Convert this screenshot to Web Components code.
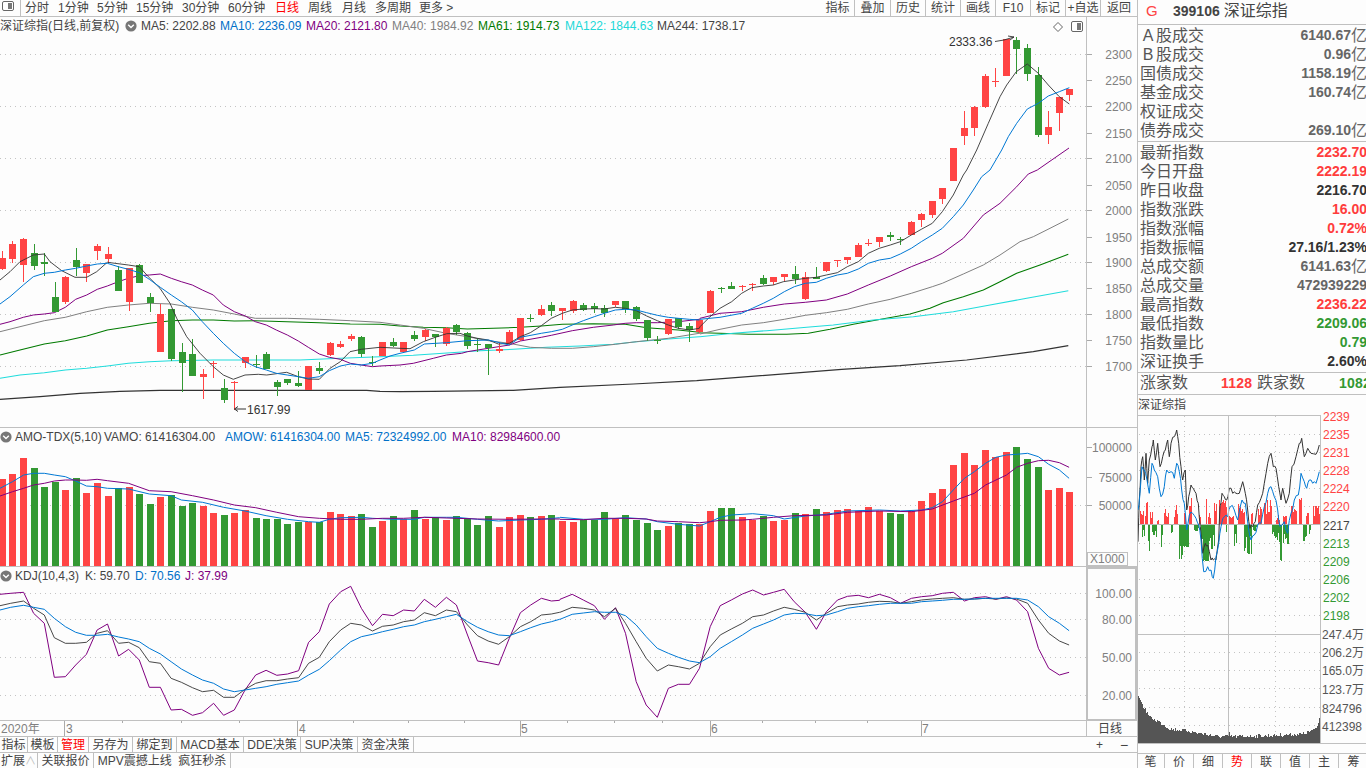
<!DOCTYPE html>
<html lang="zh-CN"><head><meta charset="utf-8"><title>深证综指</title>
<style>
html,body{margin:0;height:768px;overflow:hidden;background:#fdfdfd}
body{font:12px/16px "Liberation Sans","Noto Sans CJK SC",sans-serif;color:#444}
</style></head><body>
<tdx-app>
  <div slot="left">
    <tdx-bar h="17">
      <tdx-win-icon></tdx-win-icon>
      <tdx-item plain w="33" style="margin-left:4px">分时</tdx-item>
      <tdx-item plain w="39">1分钟</tdx-item><tdx-item plain w="39">5分钟</tdx-item>
      <tdx-item plain w="46">15分钟</tdx-item><tdx-item plain w="46">30分钟</tdx-item>
      <tdx-item plain w="47">60分钟</tdx-item><tdx-item plain on w="33">日线</tdx-item>
      <tdx-item plain w="34">周线</tdx-item><tdx-item plain w="33">月线</tdx-item>
      <tdx-item plain w="44">多周期</tdx-item><tdx-item plain w="40">更多 &gt;</tdx-item>
      <span style="flex:1"></span>
      <tdx-item w="34" first>指标</tdx-item><tdx-item w="36">叠加</tdx-item><tdx-item w="35">历史</tdx-item>
      <tdx-item w="35">统计</tdx-item><tdx-item w="35">画线</tdx-item><tdx-item w="35">F10</tdx-item>
      <tdx-item w="35">标记</tdx-item><tdx-item w="35">+自选</tdx-item><tdx-item w="36" last>返回</tdx-item>
    </tdx-bar>
    <tdx-pane kind="price" top="17" h="411">
      <span style="width:119px;flex:none">深证综指(日线,前复权)</span><tdx-drop style="margin:0 4px 0 6px"></tdx-drop>
      <span style="width:79px">MA5: 2202.88</span><span style="color:#0070c8;width:86px">MA10: 2236.09</span><span style="color:#800080;width:86px">MA20: 2121.80</span>
      <span style="color:#808080;width:86px">MA40: 1984.92</span><span style="color:#007a00;width:87px">MA61: 1914.73</span>
      <span style="color:#20d8d8;width:92px">MA122: 1844.63</span><span>MA244: 1738.17</span>
    </tdx-pane>
    <tdx-pane kind="vol" top="428" h="139">
      <tdx-drop style="margin-right:3px"></tdx-drop><span style="width:89px">AMO-TDX(5,10)</span><span style="width:121px">VAMO: 61416304.00</span>
      <span style="color:#0070c8;width:120px">AMOW: 61416304.00</span><span style="color:#0070c8;width:107px">MA5: 72324992.00</span><span style="color:#800080">MA10: 82984600.00</span>
    </tdx-pane>
    <tdx-pane kind="kdj" top="567" h="154">
      <tdx-drop style="margin-right:3px"></tdx-drop><span style="width:70px">KDJ(10,4,3)</span><span style="width:50px">K: 59.70</span>
      <span style="color:#0070c8;width:50px">D: 70.56</span><span style="color:#800080">J: 37.99</span>
    </tdx-pane>
    <tdx-pane kind="axis" top="721" h="16"></tdx-pane>
    <tdx-bar h="16" style="--pt:2px">
      <tdx-item w="28" first>指标</tdx-item><tdx-item w="30">模板</tdx-item><tdx-item w="31" on>管理</tdx-item>
      <tdx-item w="44">另存为</tdx-item><tdx-item w="44">绑定到</tdx-item><tdx-item w="67">MACD基本</tdx-item>
      <tdx-item w="57">DDE决策</tdx-item><tdx-item w="57">SUP决策</tdx-item><tdx-item w="56">资金决策</tdx-item>
      <span style="flex:1"></span>
      <tdx-item plain w="25" style="justify-content:center">+</tdx-item><tdx-item plain w="24" style="justify-content:center;font-size:14px;margin-right:1px">−</tdx-item>
    </tdx-bar>
    <tdx-bar h="15" noline style="--pt:2px">
      <tdx-item w="38" first>扩展<span style="color:#bbb;font-size:11px">∧</span></tdx-item><tdx-item w="56">关联报价</tdx-item><tdx-item w="137">MPV震撼上线&nbsp;&nbsp;疯狂秒杀</tdx-item>
    </tdx-bar>
  </div>
  <div slot="right">
    <tdx-head><span style="color:#ff4444;font-size:15px;width:27px">G</span><b style="font-size:14px">399106</b><span style="font-size:16px;margin-left:4px">深证综指</span></tdx-head>
    <tdx-section pad="top">
      <tdx-row unit="亿"><span style="display:inline-block;width:16px;text-align:center">A</span>股成交<b slot="v">6140.67</b></tdx-row>
      <tdx-row unit="亿"><span style="display:inline-block;width:16px;text-align:center">B</span>股成交<b slot="v">0.96</b></tdx-row>
      <tdx-row unit="亿">国债成交<b slot="v">1158.19</b></tdx-row>
      <tdx-row unit="亿">基金成交<b slot="v">160.74</b></tdx-row>
      <tdx-row>权证成交</tdx-row>
      <tdx-row unit="亿">债券成交<b slot="v">269.10</b></tdx-row>
    </tdx-section>
    <tdx-section pad="1">
      <tdx-row tone="up">最新指数<b slot="v">2232.70</b></tdx-row>
      <tdx-row tone="up">今日开盘<b slot="v">2222.19</b></tdx-row>
      <tdx-row tone="flat">昨日收盘<b slot="v">2216.70</b></tdx-row>
      <tdx-row tone="up">指数涨跌<b slot="v">16.00</b></tdx-row>
      <tdx-row tone="up">指数涨幅<b slot="v">0.72%</b></tdx-row>
      <tdx-row tone="flat">指数振幅<b slot="v">27.16/1.23%</b></tdx-row>
      <tdx-row unit="亿">总成交额<b slot="v">6141.63</b></tdx-row>
      <tdx-row>总成交量<b slot="v">472939229</b></tdx-row>
      <tdx-row tone="up">最高指数<b slot="v">2236.22</b></tdx-row>
      <tdx-row tone="down">最低指数<b slot="v">2209.06</b></tdx-row>
      <tdx-row tone="down">指数量比<b slot="v">0.79</b></tdx-row>
      <tdx-row tone="flat">深证换手<b slot="v">2.60%</b></tdx-row>
    </tdx-section>
    <tdx-updown></tdx-updown>
    <tdx-mini></tdx-mini>
    <tdx-bar h="15" noline style="--pt:1px">
      <tdx-item w="28" first>笔</tdx-item><tdx-item w="29">价</tdx-item><tdx-item w="29">细</tdx-item><tdx-item w="29" on>势</tdx-item>
      <tdx-item w="29">联</tdx-item><tdx-item w="29">值</tdx-item><tdx-item w="29">主</tdx-item><tdx-item w="29" last>筹</tdx-item>
    </tdx-bar>
  </div>
</tdx-app>
<script>
const RED='#ff4444',GRN='#339933',BLK='#333333',BLU='#0078d4',PUR='#800080',GRY='#808080',DGN='#007a00',CYN='#20dcdc',LINE='#c0c0c0';
const define=(n,css,html,init)=>customElements.define(n,class extends HTMLElement{
  connectedCallback(){if(this.shadowRoot)return;const s=this.attachShadow({mode:'open'});
    s.innerHTML='<style>'+css+'</style>'+(typeof html==='function'?html(this):html);if(init)init(this,s);}});

define('tdx-app',':host{display:grid;grid-template-columns:1137px 229px;height:768px;overflow:hidden}::slotted(div){display:flex;flex-direction:column;min-width:0;overflow:hidden}::slotted(div[slot=right]){box-shadow:inset 1px 0 '+LINE+'}',
  '<slot name="left"></slot><slot name="right"></slot>');
define('tdx-bar',':host{display:flex;align-items:stretch;box-sizing:border-box;flex:none;overflow:hidden;border-bottom:1px solid '+LINE+'}:host([noline]){border-bottom:0}',
  '<slot></slot>',h=>{h.style.height=h.getAttribute('h')+'px'});
define('tdx-item',`:host{display:flex;align-items:center;justify-content:center;box-sizing:border-box;flex:none;white-space:nowrap;overflow:visible;padding-top:var(--pt,0);border-right:1px solid ${LINE};line-height:15px;color:#444}
  :host([plain]){border-right:0;justify-content:flex-start}:host([last]){border-right:0}:host([on]){color:#ff0000}`,
  '<slot></slot>',h=>{h.style.width=h.getAttribute('w')+'px'});
define('tdx-win-icon',`:host{display:flex;flex:none;width:20px;height:16px;box-sizing:content-box;border-right:1px solid ${LINE};align-items:flex-start}svg{display:block}`,
  '<svg width="16" height="13" viewBox="0 0 16 13"><rect x="2.5" y="1.5" width="11" height="9" rx="1.5" fill="#fff" stroke="#666"/><rect x="8" y="3" width="4" height="6" fill="#777"/></svg>');
define('tdx-drop',':host{display:inline-flex;flex:none;width:12px;height:12px}svg{display:block}',
  '<svg width="12" height="12" viewBox="0 0 12 12"><circle cx="6" cy="6" r="5.6" fill="#777"/><path d="M3.2 4.8 6 7.6 8.8 4.8" fill="none" stroke="#fff" stroke-width="1.4"/></svg>');
define('tdx-head',`:host{display:flex;align-items:center;flex:none;box-sizing:border-box;height:25px;padding:0 0 3px 9px;border-bottom:1px solid ${LINE};white-space:nowrap;color:#444}`,'<slot></slot>');
define('tdx-section',`:host{display:block;flex:none;box-sizing:border-box;border-bottom:1px solid ${LINE};padding:1px 0 1px}`,'<slot></slot>');
define('tdx-row',`:host{display:flex;justify-content:space-between;align-items:center;height:19px;overflow:hidden;padding-left:3px;font-size:16px;line-height:19px;color:#555;white-space:nowrap}
  .v{display:flex;align-items:center;margin-right:-1px;font-size:14px;color:#666}.u{font-size:16px;font-weight:400}
  :host([tone=up]) .v{color:#ff3c3c}:host([tone=down]) .v{color:${GRN}}:host([tone=flat]) .v{color:#333}`,
  h=>`<span><slot></slot></span><span class="v"><slot name="v"></slot>${h.getAttribute('unit')?'<span class="u">'+h.getAttribute('unit')+'</span>':''}</span>`);
define('tdx-updown',`:host{display:flex;align-items:center;flex:none;box-sizing:border-box;height:22px;padding:0 0 2px 3px;border-bottom:1px solid ${LINE};font-size:16px;color:#555;white-space:nowrap;overflow:hidden}
  span,b{flex:none}b{font-size:14px;letter-spacing:.2px}`,
  '<span style="width:81px">涨家数</span><b style="color:#ff3c3c;width:36px">1128</b><span style="width:82px">跌家数</span><b style="color:'+GRN+'">1082</b>');

/* ---- chart data (page pixel coordinates) ---- */
const cs=('r258,269,251,270 r244,259,241,263 r239,265,238,282 g253,266,244,270 g262,264,253,276 g297,312,282,312 r277,302,276,304 g260,267,248,276 r264,273,264,282 r246,251,244,260 r254,259,247,263 g270,291,266,291 r268,302,268,311 g265,283,264,283 g297,303,293,312 r314,352,304,352 g309,359,309,361 g352,363,343,392 g354,376,339,376 r374,377,369,399 r363,364,361,378 g388,400,379,403 r382,383,381,410 r357,363,357,368 g364,365,355,368 g354,369,352,369 g382,387,380,396 g379,383,379,385 g383,386,371,387 r366,390,366,390 g368,371,362,374 r343,355,342,356 r344,347,341,348 r336,339,334,341 g337,354,336,357 g362,363,356,366 '+
'r342,356,342,356 g342,346,338,347 r342,352,342,353 g335,339,331,341 r330,337,329,341 g334,337,334,347 r328,344,327,346 g325,332,324,335 g333,346,332,349 g344,345,338,352 g344,348,344,375 r349,351,342,353 r332,344,330,345 r318,340,318,341 g318,319,314,322 r309,315,305,316 g305,311,302,316 r308,311,308,320 r301,311,300,313 g305,310,303,311 g306,309,303,313 g308,313,305,317 r301,305,301,307 g301,309,301,313 g307,319,306,321 g320,338,320,341 g340,341,336,344 r319,334,319,335 g318,327,318,329 g326,330,323,342 r320,332,319,333 r291,313,290,313 g288,289,287,293 g286,289,282,289 '+
'r286,287,285,291 r284,285,283,291 g278,284,275,285 r277,282,277,285 r274,277,274,281 g274,279,266,284 r277,299,272,300 g277,279,267,279 r262,271,262,272 r260,261,260,267 r257,260,257,264 r245,257,243,257 r243,244,239,246 r237,242,237,247 g235,237,232,241 g239,240,237,245 r222,235,221,235 r214,220,213,227 r201,215,201,218 r188,199,188,204 r148,181,148,181 r128,136,111,145 r107,128,106,136 r76,107,74,108 r81,82,68,87 r39,76,39,76 g40,49,37,74 g48,74,44,81 g75,135,67,137 r127,135,111,144 r97,113,97,131 r89,95,89,101').split(' ');
const vs=('r162 r147 r99 g129 g186 g171 r195 g159 r204 r174 r213 g189 r186 g207 g237 r216 g210 g243 g234 r243 r264 g270 r264 r255 g279 g282 g282 g297 g291 r291 g291 r261 r267 r273 g267 g306 r288 g273 r282 g255 r282 g276 r285 g273 g279 g300 g273 r306 r276 r270 g276 r273 g270 '+
'r288 r291 g285 g285 g261 r282 g270 g285 g294 g315 r303 g294 g297 r297 r258 g249 g249 r276 r285 g273 r288 r285 g264 r267 g252 r261 r255 r252 r258 r246 r258 g264 g267 r258 r228 r204 r192 r120 r84 r120 r75 r96 r81 g66 g102 g126 r195 r189 r201').split(' ');
const cx=i=>Math.round(1.9+10.568*i);
const seg=(a,ox,oy,sx,sy,lo=-1,hi=1e4)=>{const o=[];for(let i=0;i<a.length;i+=2){const x=ox+a[i]/sx;if(x>=lo&&x<hi)o.push([+x.toFixed(1),+(oy+a[i+1]/sy).toFixed(1)])}return o};
const pl=(p,c,w=1)=>`<polyline fill="none" stroke="${c}" stroke-width="${w}" stroke-linejoin="round" points="${p.map(q=>q.join(',')).join(' ')}"/>`;
const Z7=a=>seg(a,0,230,3,3,-1,380),Z8=a=>seg(a,380,230,3,3,380,700),Z9=(a,hi=1e4)=>seg(a,700,170,3,3,700,hi),Z3=a=>seg(a,920,0,3,3);
const lines={
 ma5:[...Z7([0,150,30,125,60,95,100,75,133,72,150,95,185,122,225,142,260,142,290,125,322,97,345,100,385,105,418,110,445,140,480,175,510,220,530,265,560,320,600,370,640,410,670,435,700,448,735,435,775,433,800,435,860,427,895,440,925,447,958,448,990,415,1021,395,1050,365,1084,358,1140,350]),
  ...Z8([0,352,60,355,90,356,130,335,166,322,200,311,240,310,262,318,292,325,325,330,355,342,388,340,421,320,451,308,484,287,514,265,547,250,577,240,610,237,643,236,673,237,706,232,736,235,769,242,800,258,832,272,865,285,895,295,928,300,958,295]),
  ...Z9([0,470,30,440,60,415,95,395,125,370,155,353,190,348,220,345,250,335,283,330,316,325,349,322,379,315,412,308,442,290,475,275,505,250,538,235,571,225,601,215,634,195,664,178,697,160,727,125,760,75,790,15,800,0]),
  ...Z3([170,450,205,370,240,290,260,255,289,215,322,192,355,220,385,255,418,290,448,312])],
 ma10:[...Z7([0,222,30,200,70,165,100,140,133,130,163,127,196,120,227,115,260,108,292,102,322,100,355,110,385,118,418,128,448,148,481,172,514,195,544,215,577,240,607,275,640,310,670,340,703,370,736,395,766,410,799,420,829,430,862,435,895,440,925,445,958,440,988,422,1021,408,1051,402,1084,405,1117,400,1140,392]),
  ...Z8([0,390,30,378,60,370,103,360,133,342,199,338,262,332,325,330,388,345,421,322,484,310,514,305,547,298,577,285,610,272,643,260,673,250,706,240,736,238,769,240,800,248,832,256,865,262,895,265,928,268,958,270]),
  ...Z9([0,448,60,442,125,430,157,415,190,400,220,385,253,365,283,350,316,340,349,337,379,325,412,315,442,310,475,297,505,280,538,270,571,265,601,252,634,235,664,215,697,195,727,175,760,140,790,105,820,60,845,20,870,0]),
  ...Z3([245,450,265,410,290,370,322,327,355,310,385,288,418,275,448,263])],
 ma20:[...Z7([0,283,30,275,70,262,100,255,133,252,163,248,196,232,227,208,260,195,292,178,322,168,355,155,385,145,418,137,448,135,481,132,514,145,544,155,577,165,607,180,640,195,670,225,703,245,736,258,766,275,799,285,829,300,862,315,895,333,925,352,958,372,988,382,1021,388,1051,400,1084,405,1117,410,1140,405]),
  ...Z8([0,408,60,405,100,400,160,385,199,375,245,370,262,365,325,355,388,345,421,333,484,322,514,316,577,302,640,292,700,285,736,280,769,278,832,278,895,275,958,268]),
  ...Z9([0,445,60,430,125,425,190,412,253,402,316,397,379,390,442,372,505,345,571,318,634,290,697,265,727,250,790,205,850,135,900,100,950,50,985,12,1012,0]),[1069,148]],
 ma40:[...Z7([0,305,60,290,133,272,196,262,260,245,322,232,385,225,448,220,514,222,577,232,640,240,703,252,766,265,862,265,958,268,1051,272,1140,277]),
  ...Z8([0,277,60,285,130,295,199,310,262,320,325,332,388,340,451,352,514,355,577,355,640,350,706,343,769,335,865,325,958,310]),
  ...Z9([0,492,60,478,125,465,190,458,253,448,316,436,379,428,442,418,505,402,571,388,634,370,697,350,727,340,790,312,850,285,900,255,960,215,1000,200,1050,175,1105,147])],
 ma61:[...Z7([0,375,60,360,133,342,196,332,260,318,322,300,385,290,448,280,514,272,577,270,640,270,703,273,766,272,862,275,958,278,1051,282,1140,285]),
  ...Z8([0,283,60,288,130,292,199,293,262,297,340,295,421,292,484,288,547,283,640,281,736,283,800,293,895,300,958,307]),
  ...Z9([0,488,60,490,145,493,260,493,325,490,390,478,460,463,530,450,630,432,690,415,730,398,790,380,850,360,900,335,950,310,1020,285,1105,253])],
 ma122:[...Z7([0,445,60,435,133,428,196,420,260,415,322,408,385,400,448,395,514,392,640,390,800,390,900,390,1021,385,1140,378]),
  ...Z8([0,380,100,376,190,370,300,362,400,358,500,352,600,348,700,343,770,335,865,327,958,320]),
  ...Z9([0,500,100,490,200,482,320,472,400,465,520,450,640,440,760,425,870,405,980,385,1105,362])],
 ma244:[...Z7([0,508,120,500,240,490,360,484,480,481,1100,481,1140,484]),
  ...Z8([0,484,60,485,160,484,400,481,540,472,760,462,950,452]),
  ...Z9([425,598,600,587,800,570,1000,545,1105,527])]
};
const Z10=a=>seg(a,0,425,2.8,3,-1,560),Z11=a=>seg(a,560,425,2.703,3,560);
const volLines={
 b:[...Z10([0,190,35,170,66,150,94,145,124,145,152,150,183,155,212,168,242,183,272,185,301,190,360,192,418,207,479,212,508,225,567,232,626,247,686,258,745,272,805,283,864,290,894,292,922,283,954,278,1012,277,1043,280,1101,283,1160,283,1188,277,1250,277,1278,277,1337,283,1396,288,1457,285,1516,283,1567,278]),
    ...Z11([0,277,63,283,120,283,177,278,233,282,263,290,320,298,377,303,406,290,433,277,463,270,521,266,577,272,606,282,663,273,720,268,777,258,863,255,920,258,977,255,1006,248,1034,230,1063,195,1093,160,1120,140,1150,115,1178,97,1207,90,1234,88,1264,85,1293,95,1321,118,1350,135,1376,160])],
 p:[...Z10([0,213,35,200,66,190,94,180,124,175,152,168,183,165,212,165,242,166,272,163,301,167,360,175,418,197,479,200,539,212,598,225,656,240,716,248,775,262,836,275,894,280,954,283,1012,283,1071,280,1130,280,1188,277,1278,280,1337,282,1426,283,1516,282,1567,282]),
    ...Z11([0,283,63,284,120,280,177,280,233,282,263,288,320,290,377,293,406,290,433,286,493,285,521,283,577,277,633,272,720,270,777,262,863,258,950,260,1006,252,1063,228,1120,205,1150,180,1207,150,1234,127,1264,115,1293,107,1321,106,1350,113,1376,127])]
};
const kdj={
 j:[...Z10([0,508,30,505,66,502,94,565,124,595,152,757,183,755,212,720,242,688,272,615,301,597,332,693,360,673,390,705,418,787,449,787,479,855,508,853,539,871,567,863,598,835,626,871,656,855,686,795,716,750,745,736,775,751,805,747,836,737,864,652,894,620,922,537,954,500,982,484,1012,550,1043,602,1071,568,1101,572,1130,555,1160,558,1188,523,1219,547,1250,517,1278,540,1309,630,1337,708,1367,713,1396,720,1426,640,1457,563,1486,540,1516,520,1544,528,1567,526]),
    ...Z11([0,523,33,508,63,525,93,542,120,583,150,548,177,625,206,770,233,840,263,877,293,790,320,778,350,778,377,730,406,605,433,542,463,525,493,507,521,495,550,510,577,502,606,493,633,530,663,562,693,613,720,560,750,525,777,514,806,511,834,518,863,508,893,518,920,535,950,520,977,515,1006,512,1034,505,1063,502,1093,528,1120,518,1150,515,1178,523,1207,515,1234,525,1264,560,1293,670,1321,730,1350,750,1376,742])],
 k:[...Z10([0,542,30,535,66,528,94,550,124,570,152,638,183,655,212,655,242,652,272,625,301,617,332,655,360,652,390,668,418,710,449,715,479,760,508,772,539,788,567,800,598,796,626,817,656,817,686,793,716,775,745,767,775,767,805,762,836,758,864,715,894,697,922,650,954,615,982,595,1012,600,1043,618,1071,604,1101,600,1130,590,1160,585,1188,563,1219,572,1250,555,1278,560,1309,600,1337,632,1367,648,1396,658,1426,635,1457,605,1486,590,1516,570,1544,567,1567,562]),
    ...Z11([0,562,33,547,63,550,93,555,120,575,150,550,177,595,206,650,233,700,263,738,293,720,320,725,350,732,377,715,406,665,433,630,463,612,493,595,521,575,550,570,577,558,606,547,633,553,663,562,693,585,720,565,750,545,777,540,806,537,834,532,863,529,893,530,920,535,950,530,977,525,1006,522,1034,520,1063,518,1093,523,1120,522,1150,520,1178,522,1207,519,1234,522,1264,535,1293,585,1321,625,1350,648,1376,660])],
 d:[...Z10([0,555,30,547,66,541,94,547,124,553,152,580,183,605,212,622,242,631,272,631,301,628,332,636,360,642,390,650,418,670,449,687,479,710,508,732,539,750,567,765,598,775,626,792,656,800,686,795,716,790,745,785,775,778,805,773,836,768,864,750,894,733,922,707,954,675,982,650,1012,635,1043,628,1071,620,1101,613,1130,605,1160,600,1188,590,1219,583,1250,575,1278,568,1309,590,1337,607,1367,620,1396,630,1426,632,1457,620,1486,608,1516,597,1544,590,1567,583]),
    ...Z11([0,583,33,568,63,564,93,560,120,562,150,562,177,572,206,600,233,635,263,670,293,685,320,697,350,708,377,713,406,695,433,670,463,650,493,630,521,610,550,597,577,585,606,570,633,565,663,566,693,572,720,570,750,560,777,550,806,545,834,542,863,538,893,535,920,535,950,535,977,530,1006,528,1034,526,1063,523,1093,523,1120,522,1150,520,1178,520,1207,520,1234,520,1264,525,1293,545,1321,575,1350,595,1376,617])]
};
const dot=(y,x0=0,x1=1086)=>`<line class="d" x1="${x0}" x2="${x1}" y1="${y+.5}" y2="${y+.5}"/>`;
const tick=y=>`<line class="c" x1="1087" x2="1092" y1="${y+.5}" y2="${y+.5}" stroke="#aaa"/>`;
const lab=(t,y,x=1132,c='#808080')=>`<text x="${x}" y="${y+4.5}" text-anchor="end" fill="${c}">${t}</text>`;
const vaxis=(y0,y1)=>`<line class="c" x1="1086.5" x2="1086.5" y1="${y0}" y2="${y1}" stroke="${LINE}"/>`;
const pane={
 price(){let s=vaxis(17,427);
  [54,106,158,210,262,314,366].forEach(y=>s+=dot(y));
  [[2300,54],[2250,80],[2200,106],[2150,133],[2100,158],[2050,185],[2000,210],[1950,237],[1900,262],[1850,288],[1800,314],[1750,340],[1700,366]].forEach(([t,y])=>s+=tick(y)+lab(t,y));
  s+=pl(lines.ma244,BLK,1.2)+pl(lines.ma61,DGN,1.1)+pl(lines.ma122,CYN,1.1)+pl(lines.ma40,GRY,1)+pl(lines.ma20,PUR,1);
  cs.forEach((c,i)=>{const col=c[0]=='r'?RED:GRN,[t,b,h,l]=c.slice(1).split(',').map(Number),x=cx(i);
   s+=`<rect class="c" x="${x}" y="${h}" width="1" height="${l-h}" fill="${col}"/><rect class="c" x="${x-3}" y="${t}" width="7" height="${b-t}" fill="${col}"/>`});
  s+=pl(lines.ma5,BLK,.9)+pl(lines.ma10,BLU,1);
  s+=`<text x="949" y="46" fill="#333">2333.36</text><path d="M995 41.5 1004 40 1014 37M1008 36 1014 37 1010 40" fill="none" stroke="#333" stroke-width=".9"/>`;
  s+=`<path d="M234.5 409H246M238 406.5 234.5 409 238 411.5" fill="none" stroke="#333"/><text x="247" y="413.5" fill="#333">1617.99</text>`;
  s+=`<path d="M1058 22.5 1062.5 27 1058 31.5 1053.5 27Z" fill="#fff" stroke="#666"/><rect x="1071.5" y="21.5" width="11" height="10" rx="1.5" fill="#fff" stroke="#666"/><rect x="1077" y="23" width="4" height="7" fill="#777"/>`;
  return s+`<line class="c" x1="0" x2="1137" y1="427.5" y2="427.5" stroke="${LINE}"/>`},
 vol(){let s=vaxis(428,566)+dot(505);
  s+=tick(447)+lab(100000,447)+tick(477)+lab(75000,477)+tick(505)+lab(50000,505);
  vs.forEach((v,i)=>{const y=Math.round(425+ +v.slice(1)/3);s+=`<rect class="c" x="${cx(i)-3}" y="${y}" width="7" height="${566-y}" fill="${v[0]=='r'?RED:GRN}"/>`});
  s+=pl(volLines.b,BLU,1)+pl(volLines.p,PUR,1);
  s+=`<rect class="c" x="1087.5" y="552.5" width="40" height="13" fill="none" stroke="${LINE}"/><text x="1090" y="563" fill="#808080">X1000</text>`;
  return s+`<line class="c" x1="0" x2="1137" y1="566.5" y2="566.5" stroke="${LINE}"/>`},
 kdj(){let s=vaxis(567,720);
  [[593,'100.00'],[619,'80.00'],[657,'50.00'],[695,'20.00']].forEach(([y,t])=>s+=dot(y)+lab(t,y));
  s+=pl(kdj.j,PUR,1)+pl(kdj.k,BLK,.9)+pl(kdj.d,BLU,1);
  s+=`<rect class="c" x="1087" y="568" width="49" height="152" fill="none" stroke="${LINE}" stroke-width="2"/>`;
  return s+`<line class="c" x1="0" x2="1087" y1="720.5" y2="720.5" stroke="${LINE}"/>`},
 axis(){let s='';
  [64,122,181,239,297,353,408,464,520,567,614,662,710,762,815,867,921].forEach(x=>s+=`<line class="c" x1="${x+.5}" x2="${x+.5}" y1="721" y2="723" stroke="#aaa"/>`);
  [[1,'2020年'],[66,'3'],[299,'4'],[521,'5'],[711,'6'],[922,'7']].forEach(([x,t])=>s+=`<text x="${x}" y="733" fill="#808080">${t}</text>`);
  [64,297,520,710,921].forEach(x=>s+=`<line class="c" x1="${x+.5}" x2="${x+.5}" y1="721" y2="736" stroke="#aaa"/>`);
  s+=`<line class="c" x1="1086.5" x2="1086.5" y1="721" y2="736" stroke="${LINE}"/><text x="1098" y="733" fill="#444">日线</text>`;
  return s+`<line class="c" x1="0" x2="1137" y1="736.5" y2="736.5" stroke="${LINE}"/>`}
};
define('tdx-pane',`:host{display:block;position:relative;flex:none;overflow:hidden}svg{display:block}text{font:12px "Liberation Sans","Noto Sans CJK SC",sans-serif}
  .c{shape-rendering:crispEdges}.d{stroke:#c4c4c4;stroke-dasharray:1 4;shape-rendering:crispEdges}
  .leg{position:absolute;left:0;top:1px;display:flex;align-items:center;height:16px;white-space:nowrap;color:#444}
  ::slotted(span){flex:none;display:block}`,
  h=>{const t=+h.getAttribute('top'),H=+h.getAttribute('h');
    return `<svg width="1137" height="${H}" viewBox="0 ${t} 1137 ${H}">${pane[h.getAttribute('kind')]()}</svg><div class="leg"><slot></slot></div>`},
  h=>{h.style.height=h.getAttribute('h')+'px'});

/* ---- intraday mini chart ---- */
function miniChart(){
  let seed=7;const rnd=()=>(seed=(seed*16807)%2147483647)/2147483647;
  const M=a=>seg(a,1136,400,3,3);
  const jag=p=>{const o=[];p.forEach((q,i)=>{o.push(q);if(i<p.length-1){const n=p[i+1];o.push([+((q[0]+n[0])/2).toFixed(1),+((q[1]+n[1])/2+(rnd()-.5)*6).toFixed(1)])}});return o};
  const bk=jag(M([6,425,10,300,15,200,20,170,25,240,30,160,35,250,40,180,48,140,52,120,58,180,65,130,72,200,80,170,88,150,95,120,100,170,105,130,115,110,122,90,128,130,135,200,140,240,148,210,152,330,158,290,165,255,172,265,180,280,187,310,193,380,200,460,208,430,215,435,225,480,232,480,240,480,248,420,252,320,258,280,265,290,272,300,280,265,290,280,300,280,310,280,320,245,328,280,335,330,342,385,350,380,358,365,365,315,375,295,385,250,395,190,405,160,412,200,420,205,428,260,435,300,440,265,450,310,460,280,468,200,480,170,490,130,497,115,505,170,515,145,525,160,540,163,550,135]));
  const bl=jag(M([6,330,12,280,18,200,25,210,33,240,40,280,48,190,55,210,65,230,75,290,85,260,92,210,105,215,115,235,122,190,130,215,137,270,145,310,152,390,160,345,170,340,180,355,188,375,195,420,203,515,215,500,225,510,232,535,240,470,248,430,255,380,265,350,275,350,283,320,295,330,305,360,318,300,328,310,338,390,345,420,355,405,365,375,375,370,385,320,395,280,405,260,415,290,425,330,432,380,445,365,455,400,465,340,475,300,487,285,495,220,505,245,512,265,520,240,530,250,540,250,550,215]));
  const reds=[[10,22,335],[25,28,350],[29,33,305],[42,48,335],[62,68,360],[84,97,325],[113,125,315],[143,147,340],[158,163,320],[164,167,295],[188,192,345],[208,212,265],[214,222,330],[234,242,310],[249,262,280],[263,272,295],[274,291,350],[304,326,300],[344,348,340],[364,376,310],[384,407,300],[419,431,345],[439,451,350],[463,482,320],[488,497,285],[509,516,340],[529,552,320]];
  const grns=[[18,26,410],[36,39,450],[48,62,410],[74,78,440],[104,108,410],[129,138,475],[140,156,440],[174,186,390],[194,216,480],[217,236,445],[269,272,395],[293,301,435],[324,346,460],[349,361,390],[408,431,425],[432,435,480],[439,456,430],[499,511,420],[519,522,400]];
  const base=524;let s='';
  [434,452,470,488,506,543,561,579,597,615,652,670,688,707,725].forEach(y=>s+=`<line class="d" x1="1139" x2="1320" y1="${y+.5}" y2="${y+.5}"/>`);
  [1184,1275].forEach(x=>s+=`<line class="d" x1="${x+.5}" x2="${x+.5}" y1="416" y2="743"/>`);
  for(let x=1139;x<1320;x++){const X=(x-1136)*3,r=reds.find(a=>X>=a[0]&&X<=a[1]),g=grns.find(a=>X>=a[0]&&X<=a[1]);
    if(r){const k=(373-r[2])/3*(rnd()<.25?1:.35+.65*rnd());s+=`<rect class="c" x="${x}" y="${Math.round(base-k)}" width="1" height="${Math.round(k)}" fill="${RED}"/>`}
    if(g){const k=(g[2]-373)/3*(rnd()<.25?1:.35+.65*rnd());s+=`<rect class="c" x="${x}" y="${base+1}" width="1" height="${Math.round(k)}" fill="${GRN}"/>`}}
  s+=`<line class="c" x1="1138" x2="1320" y1="${base+.5}" y2="${base+.5}" stroke="#bbb"/>`;
  s+=pl(bk,BLK,1)+pl(bl,BLU,1);
  s+=`<line class="c" x1="1228.5" x2="1228.5" y1="415" y2="743" stroke="${LINE}"/><line class="c" x1="1137" x2="1320" y1="634.5" y2="634.5" stroke="${LINE}"/>`;
  const env=[[0,730],[3,730],[5,885],[20,915],[40,950],[70,965],[100,985],[150,990],[200,1000],[250,1008],[277,1008],[278,980],[280,1008],[300,1008],[400,1005],[500,1000],[530,990],[545,975],[552,940]];
  let path='M1138 743';
  for(let x=1138;x<1320;x++){const X=(x-1136)*3;let i=0;while(i<env.length-2&&env[i+1][0]<X)i++;
    const a=env[i],b=env[i+1],Y=a[1]+(b[1]-a[1])*Math.min(1,(X-a[0])/(b[0]-a[0]));
    const y=Math.min(742,Math.round(400+Y/3+(x<1142||x>1317||x==1228?0:rnd()*3.5-1.2)));path+=`V${y}H${x+1}`}
  s+=`<path class="c" d="${path}V743Z" fill="#555"/>`;
  s+=`<path class="c" d="M1137.5 415V743M1320.5 415V743M1137 415.5H1320M1137 743.5H1366" fill="none" stroke="${LINE}"/>`;
  [['2239',416],['2235',434],['2231',452],['2228',470],['2224',488],['2220',506]].forEach(([t,y])=>s+=`<text x="1323" y="${y+4.5}" fill="#ff4444">${t}</text>`);
  s+=`<text x="1323" y="529.5" fill="#444">2217</text>`;
  [['2213',543],['2209',561],['2206',579],['2202',597],['2198',615]].forEach(([t,y])=>s+=`<text x="1323" y="${y+4.5}" fill="${GRN}">${t}</text>`);
  [['247.4万',634],['206.2万',652],['165.0万',670],['123.7万',689],['824796',708],['412398',726]].forEach(([t,y])=>s+=`<text x="1322" y="${y+4.5}" fill="#555">${t}</text>`);
  return s+`<line class="c" x1="1137" x2="1366" y1="753.5" y2="753.5" stroke="${LINE}"/>`;
}
define('tdx-mini',`:host{display:block;flex:none}.t{height:20px;line-height:20px;padding-left:1px;color:#444}svg{display:block;overflow:visible}
  text{font:12px "Liberation Sans","Noto Sans CJK SC",sans-serif}.c{shape-rendering:crispEdges}.d{stroke:#c4c4c4;stroke-dasharray:1 4;shape-rendering:crispEdges}`,
  ()=>`<div class="t">深证综指</div><svg width="229" height="339" viewBox="1137 415 229 339">${miniChart()}</svg>`);
</script>
</body></html>
